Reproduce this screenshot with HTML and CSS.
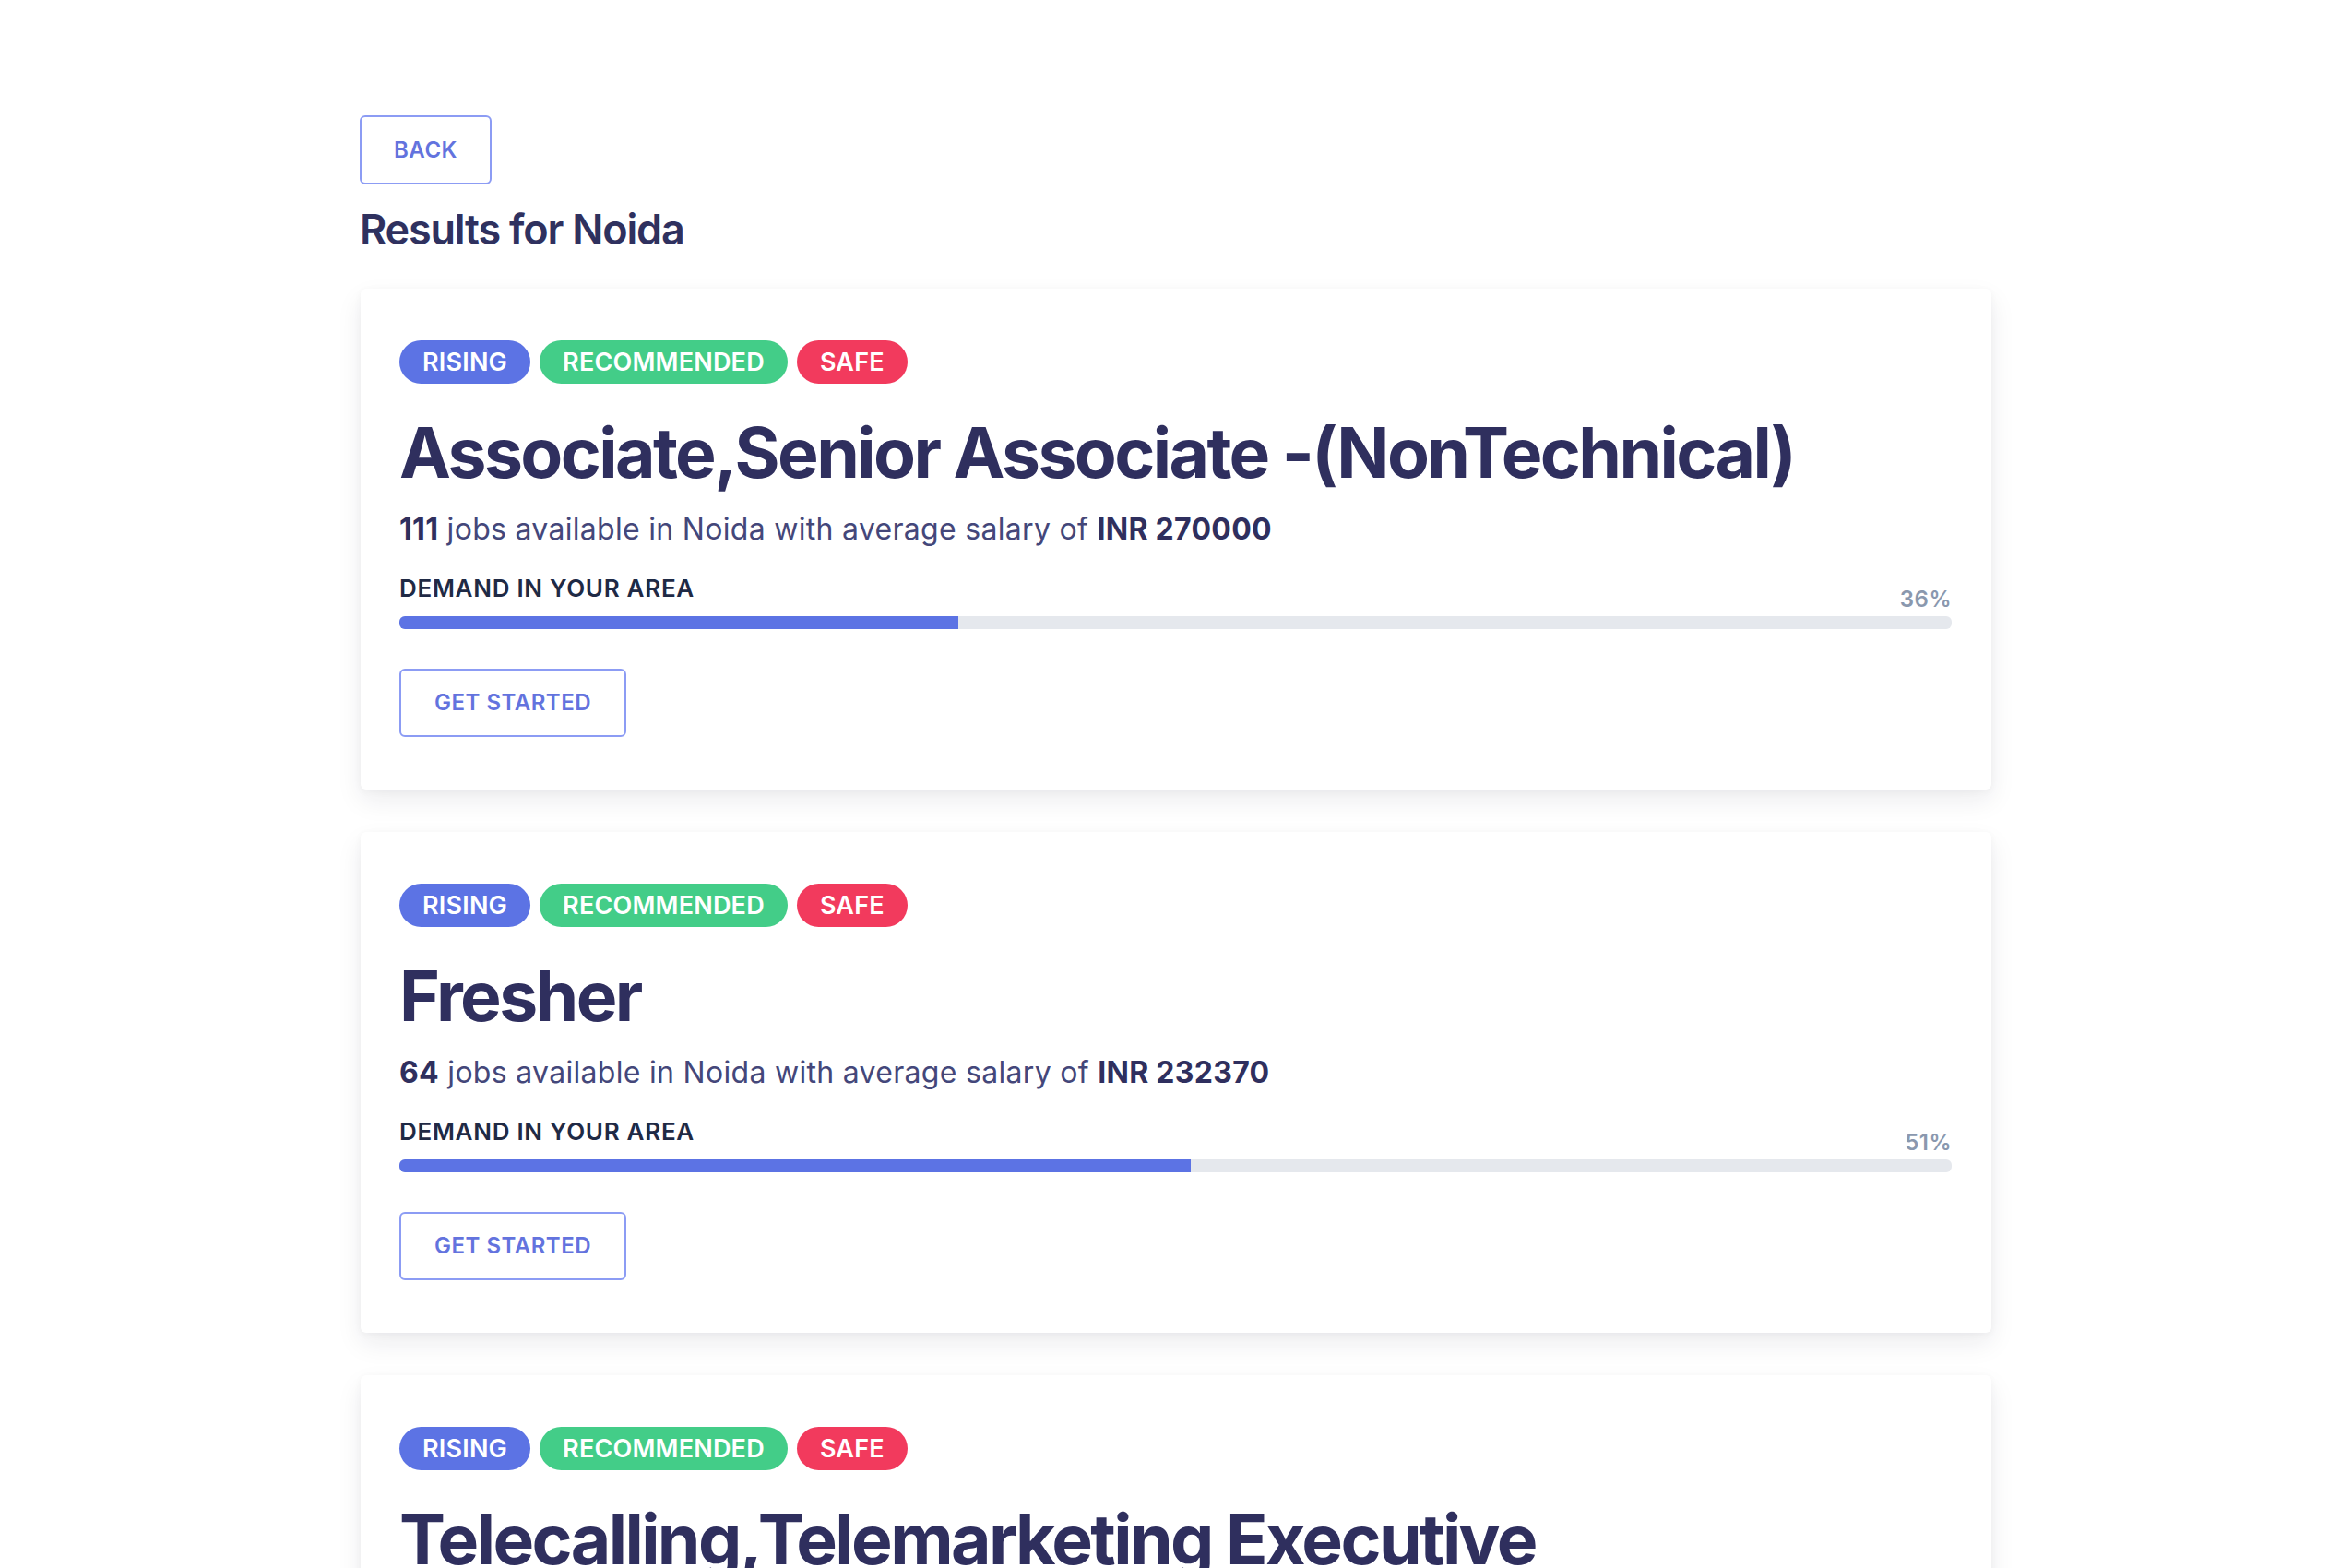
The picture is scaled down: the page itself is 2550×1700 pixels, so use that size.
FILE: index.html
```html
<!DOCTYPE html>
<html lang="en">
<head>
<meta charset="utf-8">
<title>Results for Noida</title>
<link rel="stylesheet" href="styles.css">
</head>
<body>
<main class="container">
  <button class="btn btn-back">BACK</button>
  <h1 class="page-title">Results for Noida</h1>

  <section class="card">
    <div class="badges">
      <span class="badge badge-blue">RISING</span>
      <span class="badge badge-green">RECOMMENDED</span>
      <span class="badge badge-red">SAFE</span>
    </div>
    <h2 class="job-title">Associate,Senior Associate -(NonTechnical)</h2>
    <p class="job-info"><b>111</b> jobs available in Noida with average salary of <b>INR 270000</b></p>
    <div class="demand-row">
      <span class="demand-label">DEMAND IN YOUR AREA</span>
      <span class="demand-pct">36%</span>
    </div>
    <div class="bar"><div class="bar-fill" style="width:36%"></div></div>
    <button class="btn btn-start">GET STARTED</button>
  </section>

  <section class="card">
    <div class="badges">
      <span class="badge badge-blue">RISING</span>
      <span class="badge badge-green">RECOMMENDED</span>
      <span class="badge badge-red">SAFE</span>
    </div>
    <h2 class="job-title">Fresher</h2>
    <p class="job-info"><b>64</b> jobs available in Noida with average salary of <b>INR 232370</b></p>
    <div class="demand-row">
      <span class="demand-label">DEMAND IN YOUR AREA</span>
      <span class="demand-pct">51%</span>
    </div>
    <div class="bar"><div class="bar-fill" style="width:51%"></div></div>
    <button class="btn btn-start">GET STARTED</button>
  </section>

  <section class="card">
    <div class="badges">
      <span class="badge badge-blue">RISING</span>
      <span class="badge badge-green">RECOMMENDED</span>
      <span class="badge badge-red">SAFE</span>
    </div>
    <h2 class="job-title">Telecalling,Telemarketing Executive</h2>
    <p class="job-info"><b>48</b> jobs available in Noida with average salary of <b>INR 180000</b></p>
    <div class="demand-row">
      <span class="demand-label">DEMAND IN YOUR AREA</span>
      <span class="demand-pct">28%</span>
    </div>
    <div class="bar"><div class="bar-fill" style="width:28%"></div></div>
    <button class="btn btn-start">GET STARTED</button>
  </section>
</main>
</body>
</html>
```
FILE: styles.css
```css
* { box-sizing: border-box; }

html, body {
  margin: 0;
  padding: 0;
  background: #ffffff;
}

body {
  font-family: Inter, "Noto Sans", "Liberation Sans", sans-serif;
  color: #2f315f;
}

.container {
  width: 1768px;
  margin: 0 auto;
  padding-top: 125px;
  display: flex;
  flex-direction: column;
  align-items: stretch;
}

.btn {
  align-self: flex-start;
  font-family: inherit;
  font-weight: 600;
  font-size: 24px;
  letter-spacing: 0.5px;
  color: #6373de;
  background: #ffffff;
  border: 2px solid #8c9cf4;
  border-radius: 6px;
  padding: 0 36px;
  height: 75px;
  line-height: 1;
  cursor: pointer;
}

.btn-back {
  margin-left: -1px;
  width: 143px;
  padding: 0;
}

.page-title {
  margin: 22px 0 37px -1px;
  font-size: 45px;
  line-height: 54px;
  font-weight: 600;
  color: #2f315f;
  letter-spacing: -1.2px;
}

.card {
  background: #ffffff;
  border-radius: 6px;
  box-shadow: 0 12px 28px rgba(20, 20, 50, 0.08), 0 2px 8px rgba(20, 20, 50, 0.04);
  padding: 56px 43px 57px 42px;
  margin-bottom: 46px;
  display: flex;
  flex-direction: column;
}

.badges {
  display: flex;
  gap: 10px;
}

.badge {
  height: 47px;
  padding: 0 25px;
  border-radius: 24px;
  color: #ffffff;
  font-size: 27px;
  font-weight: 600;
  display: inline-flex;
  align-items: center;
  letter-spacing: 0.2px;
}

.badge-blue { background: #5c73e4; }
.badge-green { background: #43cd88; }
.badge-red { background: #f23a5d; }

.job-title {
  margin: 29px 0 0 0;
  font-size: 75px;
  line-height: 92px;
  font-weight: 700;
  color: #2f2f5e;
  letter-spacing: -2.6px;
}

.job-info {
  margin: 14px 0 0 0;
  font-size: 32px;
  line-height: 45px;
  color: #44477a;
  letter-spacing: 0.3px;
}

.job-info b {
  font-weight: 700;
  color: #2f2f5e;
}

.demand-row {
  margin-top: 24px;
  display: flex;
  justify-content: space-between;
  align-items: flex-end;
}

.demand-label {
  font-size: 26px;
  line-height: 36px;
  font-weight: 600;
  color: #1f2a45;
  letter-spacing: 0.7px;
}

.demand-pct {
  font-size: 24px;
  line-height: 22px;
  font-weight: 600;
  color: #8a98ae;
  letter-spacing: 0.5px;
  margin-bottom: -5px;
}

.bar {
  margin-top: 12px;
  height: 14px;
  border-radius: 6px;
  background: #e5e8ed;
  overflow: hidden;
  display: flex;
}

.bar-fill {
  height: 100%;
  background: #5c73e4;
}

.btn-start {
  margin-top: 43px;
  height: 74px;
}
```
